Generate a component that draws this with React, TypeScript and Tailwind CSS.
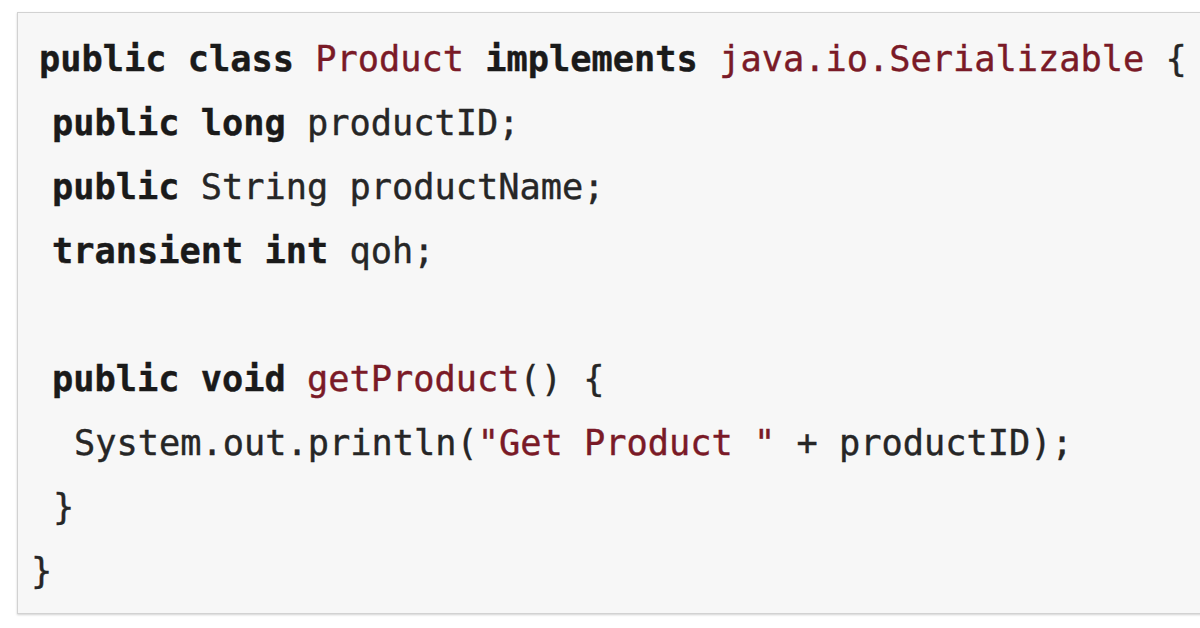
import React from "react";

const K = ({ children }: { children: React.ReactNode }) => (
  <span className="font-bold text-[#1a1a1a]">{children}</span>
);
const R = ({ children }: { children: React.ReactNode }) => (
  <span className="text-[#7a1a27]">{children}</span>
);

export default function App() {
  return (
    <div className="w-[1200px] h-[628px] overflow-hidden bg-white pt-[12px] pl-[17px]">
      <div
        className="w-[1220px] h-[602px] bg-[#f7f7f7] border border-[#d2d2d2] shadow-[0_1px_2px_rgba(0,0,0,0.18)] pt-[14px] pl-[13px] text-[35.3px] leading-[64px] text-[#262626] whitespace-pre [-webkit-text-stroke:0.4px_currentColor]"
        style={{ fontFamily: '"DejaVu Sans Mono", "Liberation Mono", monospace' }}
      >
        <div className="pl-[8px]">
          <K>public</K> <K>class</K> <R>Product</R> <K>implements</K> <R>java.io.Serializable</R> {"{"}
        </div>
        <div className="pl-[21px]">
          <K>public</K> <K>long</K> productID;
        </div>
        <div className="pl-[21px]">
          <K>public</K> String productName;
        </div>
        <div className="pl-[21px]">
          <K>transient</K> <K>int</K> qoh;
        </div>
        <div className="h-[64px]"></div>
        <div className="pl-[21px]">
          <K>public</K> <K>void</K> <R>getProduct</R>() {"{"}
        </div>
        <div className="pl-[43px]">
          System.out.println(<R>"Get Product "</R> + productID);
        </div>
        <div className="pl-[22px]">{"}"}</div>
        <div className="pl-[0px]">{"}"}</div>
      </div>
    </div>
  );
}
